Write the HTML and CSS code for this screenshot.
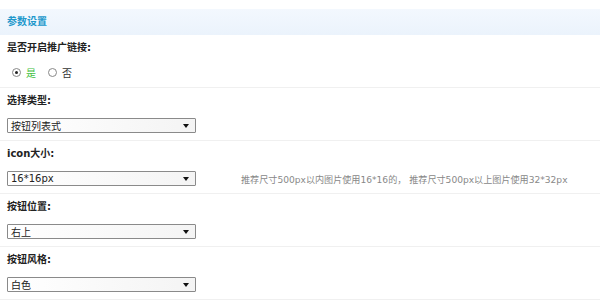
FILE: index.html
```html
<!DOCTYPE html>
<html lang="zh">
<head>
<meta charset="UTF-8">
<title>参数设置</title>
<link rel="stylesheet" href="styles.css">
</head>
<body>

<div class="panel">
<h3 class="head">参数设置</h3>

<div class="item">
<div class="label">是否开启推广链接:</div>
<div class="radios">
<label class="radio"><span class="dot on"></span><span class="yes">是</span></label>
<label class="radio"><span class="dot"></span><span>否</span></label>
</div>
</div>

<div class="item">
<div class="label">选择类型:</div>
<div class="sel"><span>按钮列表式</span><i class="arrow"></i></div>
</div>

<div class="item">
<div class="label">icon大小:</div>
<div class="line">
<div class="sel"><span>16*16px</span><i class="arrow"></i></div>
<span class="tip">推荐尺寸500px以内图片使用16*16的， 推荐尺寸500px以上图片使用32*32px</span>
</div>
</div>

<div class="item">
<div class="label">按钮位置:</div>
<div class="sel"><span>右上</span><i class="arrow"></i></div>
</div>

<div class="item">
<div class="label">按钮风格:</div>
<div class="sel"><span>白色</span><i class="arrow"></i></div>
</div>
</div>

</body>
</html>
```

FILE: styles.css
```css
*{box-sizing:border-box}
body{margin:0;background:#fff;font-family:"DejaVu Sans","Noto Sans CJK SC",sans-serif;font-size:10px;color:#333}
.panel{padding-top:9px}
.head{margin:0;height:26px;line-height:26px;padding:0 7px;background:linear-gradient(#f3f8fe,#ebf3fc);color:#2198cc;font-size:10px;font-weight:bold}
.item{padding:5px 7px 0;height:53px;border-bottom:1px solid #f0f0f0}
.label{height:16px;line-height:16px;font-weight:bold;color:#222;margin-bottom:9px}
.radios{display:flex;gap:12px;padding-left:5px;margin-top:1px}
.radio{display:flex;align-items:center;gap:5px}
.dot{width:9px;height:9px;border:1px solid #888;border-radius:50%;background:#fff;position:relative}
.dot.on:after{content:"";position:absolute;left:2px;top:2px;width:3px;height:3px;border-radius:50%;background:#222}
.yes{color:#3fbf3f}
.line{display:flex;align-items:center;gap:45px}
.sel{flex-shrink:0;width:189px;height:15px;border:1px solid #8a8a8a;border-radius:1px;background:linear-gradient(90deg,#fff,#f4f4f4);display:flex;align-items:center;justify-content:space-between;padding:0 6px 0 3px;color:#222}
.arrow{width:0;height:0;border-left:3px solid transparent;border-right:3px solid transparent;border-top:4px solid #111}
.tip{color:#888;white-space:nowrap;font-size:9.1px}
```
